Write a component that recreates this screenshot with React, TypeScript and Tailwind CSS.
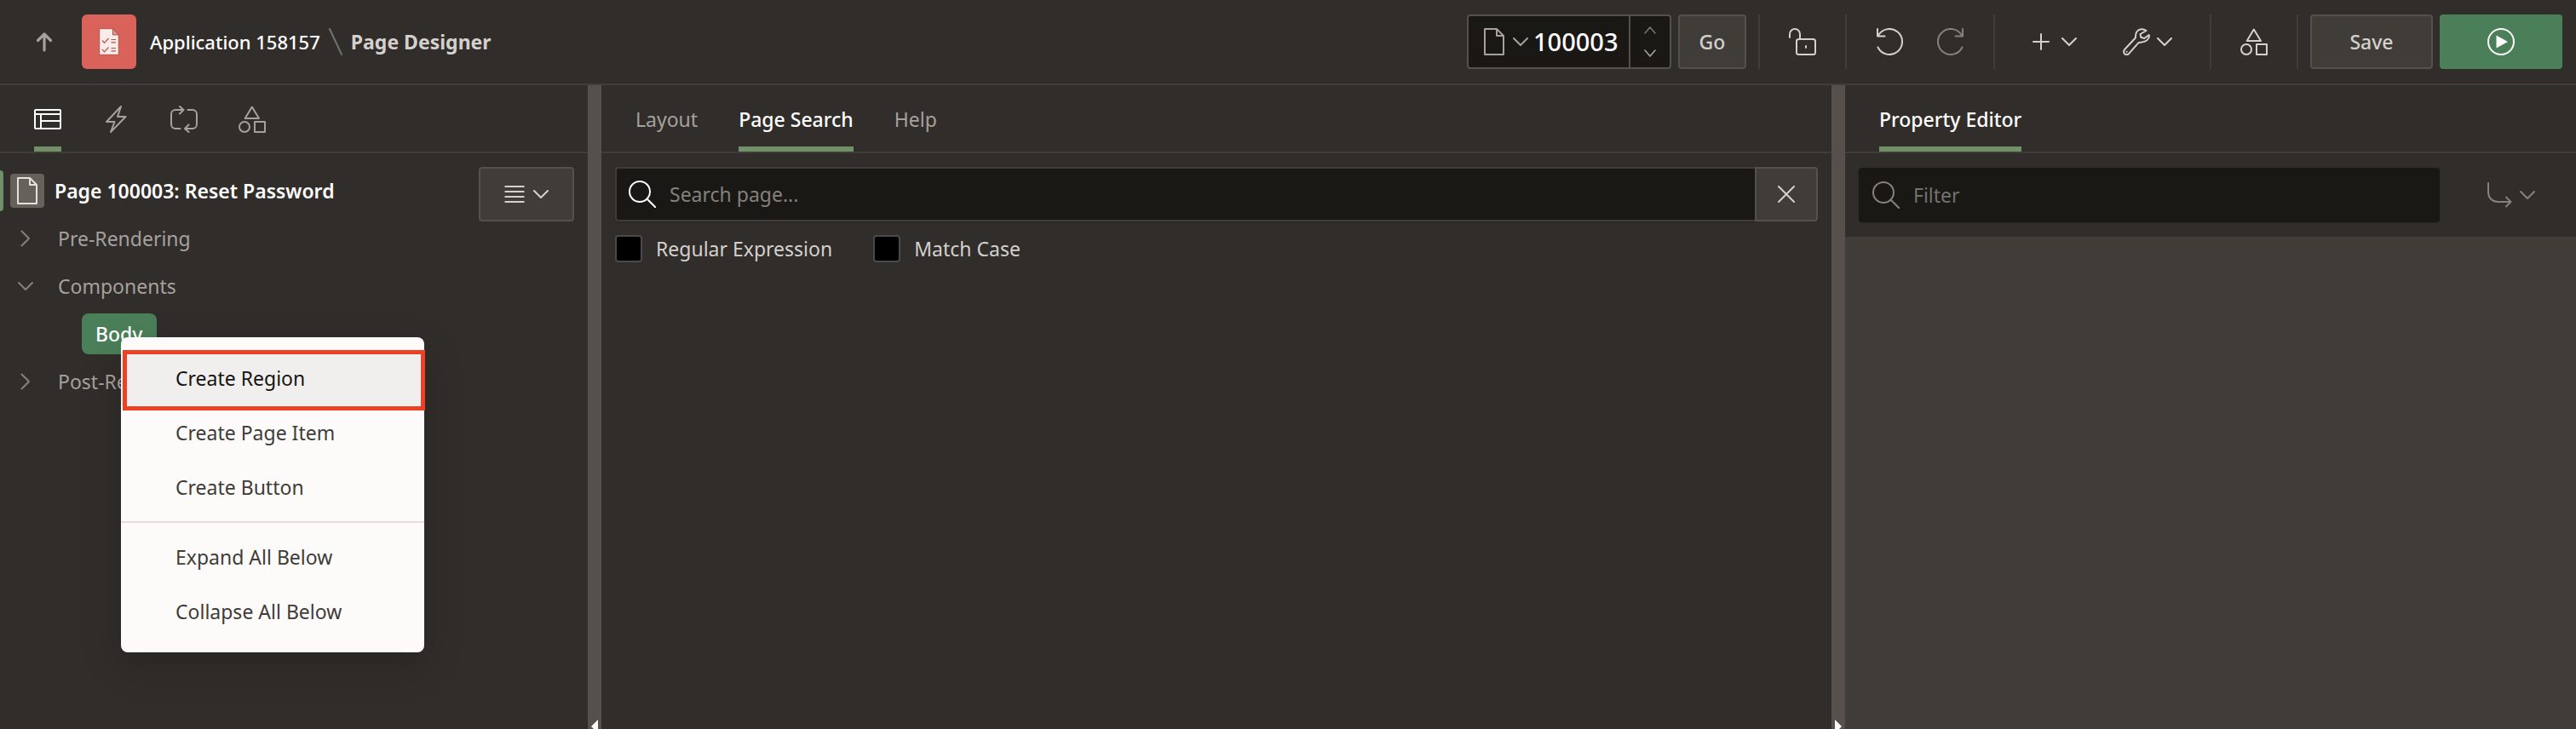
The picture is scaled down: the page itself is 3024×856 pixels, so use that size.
import type { ReactNode } from "react";

const stroke = {
  fill: "none",
  stroke: "currentColor",
  strokeWidth: 2,
  strokeLinecap: "round" as const,
  strokeLinejoin: "round" as const,
};

function Icon({ children, className = "" }: { children: ReactNode; className?: string }) {
  return (
    <svg viewBox="0 0 32 32" className={`size-8 shrink-0 ${className}`} aria-hidden="true" {...stroke}>
      {children}
    </svg>
  );
}

function ChevronDown({ className = "" }: { className?: string }) {
  return (
    <svg viewBox="0 0 18 10" className={`h-2.5 w-[18px] shrink-0 ${className}`} aria-hidden="true" {...stroke}>
      <path d="M1 1 9 9l8-8" />
    </svg>
  );
}

function ChevronRight() {
  return (
    <svg viewBox="0 0 12 20" className="h-5 w-3 shrink-0" aria-hidden="true" {...stroke}>
      <path d="m1.5 1.5 8.5 8.5-8.5 8.5" />
    </svg>
  );
}

function SmallChevron({ up = false }: { up?: boolean }) {
  return (
    <svg viewBox="0 0 14 9" className="h-[9px] w-3.5" aria-hidden="true" {...stroke} strokeWidth={1.6}>
      <path d={up ? "M1 8l6-7 6 7" : "M1 1l6 7 6-7"} />
    </svg>
  );
}

function FileIcon() {
  return (
    <svg viewBox="0 0 24 32" className="h-8 w-6 shrink-0" aria-hidden="true" {...stroke}>
      <path d="M1 1h14l8 8v22H1zM15 1v8h8" />
    </svg>
  );
}

function ShapesIcon() {
  return (
    <Icon>
      <path d="M15.8 1.5 24 15H7.7z" />
      <circle cx="7" cy="25" r="6" />
      <path d="M19 19h12v12H19z" />
    </Icon>
  );
}

function SearchIcon({ className }: { className: string }) {
  return (
    <Icon className={className}>
      <circle cx="13" cy="13" r="12" />
      <path d="m21.5 21.5 10 10" />
    </Icon>
  );
}

function Divider() {
  return <span className="h-16 w-0.5 shrink-0 bg-[#403c38]" />;
}

function Header() {
  return (
    <header className="flex h-[100px] shrink-0 items-center border-b-2 border-[#403c38] pr-4 pl-10 text-[#d4d1cd]">
      <a href="#app" aria-label="Up to application" className="mr-8 text-[#a5a19d]">
        <svg viewBox="0 0 24 24" className="size-6" aria-hidden="true" {...stroke} strokeWidth={3.2}>
          <path d="M12 22V4M4.5 10.5 12 3l7.5 7.5" />
        </svg>
      </a>
      <span className="mr-4 flex size-16 shrink-0 items-center justify-center rounded-md bg-[#d9635a]">
        <svg viewBox="0 0 24 32" className="h-8 w-6" fill="none" aria-hidden="true">
          <path d="M.7.7h16l6.6 7v23.6H.7z" fill="#f8ebe9" stroke="#b3544c" strokeWidth="1" />
          <path d="M16.5.7v7.2h6.8z" fill="#e59a93" stroke="#a94d45" strokeWidth="1" />
          <path
            d="m4 14.5 2.5 2.8 5-5.3M4 25l2.5 2.8 5-5.3M14.5 13.5H20M14.5 16.8H20M14.5 23.5H20M14.5 26.8H20"
            stroke="#b5544c"
            strokeWidth="1.2"
          />
        </svg>
      </span>
      <nav aria-label="Breadcrumb" className="flex items-center whitespace-nowrap">
        <a href="#app" className="text-[22px] font-medium text-white">
          Application 158157
        </a>
        <svg viewBox="0 0 16 32" className="mx-2.5 h-8 w-4 text-[#75716c]" aria-hidden="true" {...stroke}>
          <path d="m1 1 14 30" />
        </svg>
        <span className="font-bold">Page Designer</span>
      </nav>

      <div className="ml-auto flex items-center">
        <div className="flex h-16 w-60 overflow-hidden rounded-[4px] border-2 border-[#55504c] bg-[#191815]">
          <button type="button" aria-label="Page list" className="flex items-center gap-2.5 pl-[18px] text-[#a5a19d]">
            <FileIcon />
            <ChevronDown />
          </button>
          <input
            aria-label="Page number"
            defaultValue="100003"
            className="w-0 min-w-0 flex-1 bg-transparent pl-1.5 text-[29px] font-medium text-white outline-none"
          />
          <div className="flex w-12 flex-col items-center justify-between border-l-2 border-[#55504c] py-3">
            <button type="button" aria-label="Next page" className="flex text-[#75716c]">
              <SmallChevron up />
            </button>
            <button type="button" aria-label="Previous page" className="flex text-[#a5a19d]">
              <SmallChevron />
            </button>
          </div>
        </div>
        <button
          type="button"
          className="mr-3.5 ml-2 h-16 w-20 rounded-[4px] border-2 border-[#55504c] bg-[#403c38] font-medium"
        >
          Go
        </button>
        <Divider />
        <button type="button" aria-label="Lock page" className="flex w-[100px] justify-center">
          <Icon>
            <rect x="9" y="13" width="22" height="18" rx="2.5" />
            <path d="M1 11V7a6 6 0 0 1 12 0v6M20 21v2" />
          </Icon>
        </button>
        <Divider />
        <div className="flex px-3.5">
          <button type="button" aria-label="Undo" className="flex w-[72px] justify-center">
            <Icon>
              <path d="M2.5 9.5a15 15 0 1 1 0 13M2 1v8.5h8.5" />
            </Icon>
          </button>
          <button type="button" aria-label="Redo" className="flex w-[72px] justify-center text-[#85817c]">
            <Icon>
              <path d="M29.5 9.5a15 15 0 1 0 0 13M30 1v8.5h-8.5" />
            </Icon>
          </button>
        </div>
        <Divider />
        <div className="flex pr-5 pl-3.5">
          <button type="button" aria-label="Create" className="flex w-28 items-center justify-center gap-3.5">
            <svg viewBox="0 0 20 20" className="size-5" aria-hidden="true" {...stroke}>
              <path d="M10 1v18M1 10h18" />
            </svg>
            <ChevronDown />
          </button>
          <button type="button" aria-label="Utilities" className="flex w-[106px] items-center justify-center gap-2">
            <Icon>
              <path d="M27.5 3C24 .3 19 .5 16.5 4c-1.7 2.5-1.3 5-1.7 7.5L2.2 25c-1.7 2-1.2 4.5.3 5.6 1.5.9 3.5.7 4.7-.8l11.3-12.6c3-.7 6.5-.2 9.5-2.7 2.5-2.2 3.5-4.5 2.7-6.5l-5.5 4-4-1.2-.6-3.8z" />
              <path d="M4.7 27.7v.1" />
            </Icon>
            <ChevronDown />
          </button>
        </div>
        <Divider />
        <button type="button" aria-label="Shared components" className="flex w-[100px] justify-center">
          <ShapesIcon />
        </button>
        <Divider />
        <button
          type="button"
          className="mr-2 ml-3.5 h-16 w-36 rounded-[4px] border-2 border-[#55504c] bg-[#403c38] font-medium"
        >
          Save
        </button>
        <button
          type="button"
          aria-label="Run page"
          className="flex h-16 w-36 items-center justify-center rounded-[4px] bg-[#4b7f59] text-white"
        >
          <Icon>
            <circle cx="16" cy="16" r="15" />
            <path d="M10.500 8.500v15L24 16z" fill="currentColor" stroke="none" />
          </Icon>
        </button>
      </div>
    </header>
  );
}

function Tab({ label, active = false, children }: { label: string; active?: boolean; children?: ReactNode }) {
  return (
    <button
      type="button"
      role="tab"
      aria-selected={active}
      aria-label={label}
      className={`flex h-full items-center border-b-[6px] pt-2 whitespace-nowrap ${
        active ? "border-[#6f9068] font-medium text-white" : "border-transparent text-[#a5a19d]"
      }`}
    >
      {children ?? label}
    </button>
  );
}

function TabBar({ children, className }: { children: ReactNode; className: string }) {
  return (
    <div role="tablist" className={`flex h-20 shrink-0 border-b-2 border-[#403c38] ${className}`}>
      {children}
    </div>
  );
}

function Splitter({ points }: { points: string }) {
  return (
    <div className="flex w-4 shrink-0 items-end justify-center bg-[#55504c]">
      <svg viewBox="0 0 8 11" className="h-[11px] w-2" aria-hidden="true">
        <polygon points={points} fill="#fcfbfa" />
      </svg>
    </div>
  );
}

function MenuItem({ children, active = false }: { children: string; active?: boolean }) {
  return (
    <button
      type="button"
      role="menuitem"
      className={`flex h-16 w-full items-center pl-16 ${active ? "bg-[#f0efee] text-[#161513]" : "text-[#403c38]"}`}
    >
      {children}
    </button>
  );
}

function ContextMenu() {
  return (
    <div
      role="menu"
      className="absolute top-7 left-[46px] z-10 w-[356px] rounded-lg bg-[#fcfbfa] py-4 shadow-[0_16px_48px_0_rgba(0,0,0,0.18)]"
    >
      <div className="relative">
        <MenuItem active>Create Region</MenuItem>
        <span className="pointer-events-none absolute -top-px -right-px -bottom-1.5 left-0.5 border-[5px] border-[#ee4025]" />
      </div>
      <MenuItem>Create Page Item</MenuItem>
      <MenuItem>Create Button</MenuItem>
      <hr className="my-2 border-t-2 border-[#e4e1dd]" />
      <MenuItem>Expand All Below</MenuItem>
      <MenuItem>Collapse All Below</MenuItem>
    </div>
  );
}

function LeftPanel() {
  return (
    <aside className="flex w-[690px] shrink-0 flex-col">
      <TabBar className="gap-12 pl-10">
        <Tab label="Rendering" active>
          <Icon>
            <rect x="1" y="5" width="30" height="22" rx="1" />
            <path d="M1 10h30M8 10v17M8 18h23" />
          </Icon>
        </Tab>
        <Tab label="Dynamic Actions">
          <Icon>
            <path d="m22 1-4 12h9.5L10 31l4.5-12H5z" />
          </Icon>
        </Tab>
        <Tab label="Processing">
          <Icon>
            <path d="M11.5 27H6a5 5 0 0 1-5-5V10a5 5 0 0 1 5-5h9M11 1l4.500 4L11 9.500M20.500 5H26a5 5 0 0 1 5 5v12a5 5 0 0 1-5 5h-8.500M21.500 22.500 17 27l4.500 4" />
          </Icon>
        </Tab>
        <Tab label="Page Shared Components">
          <ShapesIcon />
        </Tab>
      </TabBar>

      <div className="flex items-start pt-4">
        <ul role="tree" className="flex-1 text-[#a5a19d]">
          <li role="treeitem" className="flex h-14 items-center font-semibold text-white">
            <span className="mr-2 h-12 w-1 rounded-r-sm bg-[#6f9068]" />
            <span className="mr-3 flex h-10 w-10 items-center justify-center rounded-[4px] bg-[#67615c] text-[#e4e1dd]">
              <FileIcon />
            </span>
            Page 100003: Reset Password
          </li>
          <li role="treeitem" className="flex h-14 items-center">
            <span className="flex w-[68px] pl-6 text-[#85817c]">
              <ChevronRight />
            </span>
            Pre-Rendering
          </li>
          <li role="treeitem" className="flex h-14 items-center">
            <span className="flex w-[68px] pl-[21px] text-[#85817c]">
              <ChevronDown />
            </span>
            Components
          </li>
          <li role="treeitem" className="flex h-14 items-center pl-24">
            <div className="relative">
              <span className="flex h-12 w-[88px] items-center rounded-lg bg-[#4b7f59] pl-4 font-medium text-white">Body</span>
              <div className="absolute inset-0">
                <ContextMenu />
              </div>
            </div>
          </li>
          <li role="treeitem" className="flex h-14 items-center">
            <span className="flex w-[68px] pl-6 text-[#85817c]">
              <ChevronRight />
            </span>
            Post-Rendering
          </li>
        </ul>
        <button
          type="button"
          aria-label="Tree options"
          className="mr-4 flex h-16 w-28 items-center justify-center gap-2.5 rounded-[4px] border-2 border-[#55504c] bg-[#403c38] text-[#d4d1cd]"
        >
          <svg viewBox="0 0 24 20" className="h-5 w-6" aria-hidden="true" {...stroke}>
            <path d="M.5 1h23M.5 7h23M.5 13h23M.5 19h23" strokeLinecap="butt" />
          </svg>
          <ChevronDown />
        </button>
      </div>
    </aside>
  );
}

function Check({ label }: { label: string }) {
  return (
    <label className="flex items-center gap-4">
      <input type="checkbox" className="size-8 appearance-none rounded-[4px] border-2 border-[#4a4a4c] bg-black checked:bg-[#4b7f59]" />
      {label}
    </label>
  );
}

function SearchPanel() {
  return (
    <main className="flex min-w-0 flex-1 flex-col">
      <TabBar className="gap-12 pl-10">
        <Tab label="Layout" />
        <Tab label="Page Search" active />
        <Tab label="Help" />
      </TabBar>
      <div className="flex px-4 pt-4">
        <label className="flex h-16 flex-1 items-center gap-4 rounded-l-[4px] border-2 border-r-0 border-[#403c38] bg-[#191815] pl-3.5 shadow-sm">
          <SearchIcon className="text-white" />
          <input
            aria-label="Search page"
            placeholder="Search page..."
            className="min-w-0 flex-1 bg-transparent text-white outline-none placeholder:text-[#85817c]"
          />
        </label>
        <button
          type="button"
          aria-label="Clear search"
          className="flex h-16 w-[74px] items-center justify-center rounded-r-[4px] border-2 border-[#55504c] bg-[#403c38] text-[#d4d1cd]"
        >
          <svg viewBox="0 0 20 20" className="size-5" aria-hidden="true" {...stroke}>
            <path d="m1 1 18 18M19 1 1 19" />
          </svg>
        </button>
      </div>
      <div className="flex gap-12 px-4 pt-4 text-[#d4d1cd]">
        <Check label="Regular Expression" />
        <Check label="Match Case" />
      </div>
    </main>
  );
}

function PropertyPanel() {
  return (
    <aside className="flex w-[858px] shrink-0 flex-col">
      <TabBar className="pl-10">
        <Tab label="Property Editor" active />
      </TabBar>
      <div className="flex h-[98px] items-center px-4">
        <label className="flex h-16 flex-1 items-center gap-4 rounded-[4px] bg-[#191815] pl-4 shadow-sm">
          <SearchIcon className="text-[#85817c]" />
          <input
            aria-label="Filter"
            placeholder="Filter"
            className="min-w-0 flex-1 bg-transparent text-white outline-none placeholder:text-[#75716c]"
          />
        </label>
        <button
          type="button"
          aria-label="Go to group"
          className="ml-4 flex h-16 w-32 items-center justify-end gap-2 pr-8 text-[#85817c]"
        >
          <Icon>
            <path d="M3 2v11a11 11 0 0 0 11 11h15M24 18.500l5.500 5.500-5.500 5.500" />
          </Icon>
          <ChevronDown />
        </button>
      </div>
      <div className="flex-1 bg-[#403c38]" />
    </aside>
  );
}

export default function App() {
  return (
    <div className="flex h-screen flex-col overflow-hidden bg-[#312d2a] font-['Noto_Sans',sans-serif] text-[23px] leading-8">
      <Header />
      <div className="flex min-h-0 flex-1">
        <LeftPanel />
        <Splitter points="8,0 0,8 8,16" />
        <SearchPanel />
        <Splitter points="0,0 8,8 0,16" />
        <PropertyPanel />
      </div>
    </div>
  );
}
